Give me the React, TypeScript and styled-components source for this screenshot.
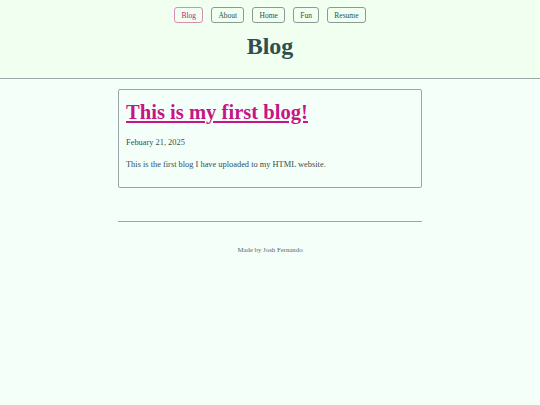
import styled, { createGlobalStyle } from "styled-components";

const GlobalStyle = createGlobalStyle`
  html, body {
    margin: 0;
    padding: 0;
    background: #f5fffa;
  }
  body {
    font-family: "Liberation Serif", "DejaVu Serif", serif;
    color: #2f4f4f;
  }
`;

const Header = styled.header`
  background: #f0fff0;
  border-bottom: 1px solid #9aaaa4;
  padding-top: 7px;
  height: 71px;
  display: flex;
  flex-direction: column;
  align-items: center;
`;

const Nav = styled.nav`
  display: flex;
  gap: 8px;
`;

const NavButton = styled.a<{ $active?: boolean }>`
  display: flex;
  align-items: center;
  justify-content: center;
  height: 14px;
  padding: 0 6.2px;
  border: 1px solid ${(p) => (p.$active ? "#d98fb4" : "#8a9a96")};
  border-radius: 3px;
  font-size: 7.5px;
  color: ${(p) => (p.$active ? "#c71585" : "#2f4f4f")};
  text-decoration: none;
`;

const Title = styled.h1`
  margin: 10px 0 0;
  font-size: 24px;
  font-weight: 700;
  color: #2f4f4f;
`;

const Main = styled.main`
  width: 304px;
  margin: 10px auto 0;
`;

const Card = styled.article`
  border: 1px solid #9aa6a6;
  border-radius: 2px;
  padding: 9px 7px 24px;
  height: 99px;
  box-sizing: border-box;
`;

const PostTitle = styled.a`
  display: block;
  font-size: 20.6px;
  font-weight: 700;
  color: #c71585;
  text-decoration: underline;
  line-height: 26px;
`;

const DateLine = styled.p`
  margin: 13px 0 0;
  font-size: 8.4px;
`;

const Text = styled.p`
  margin: 13px 0 0;
  font-size: 8.4px;
`;

const Rule = styled.hr`
  margin: 33px 0 0;
  border: none;
  border-top: 1px solid #9aa6b0;
`;

const Footer = styled.footer`
  text-align: center;
  margin-top: 24px;
  font-size: 6.8px;
  color: #556b6b;
`;

export default function App() {
  return (
    <>
      <GlobalStyle />
      <Header>
        <Nav>
          <NavButton $active>Blog</NavButton>
          <NavButton>About</NavButton>
          <NavButton>Home</NavButton>
          <NavButton>Fun</NavButton>
          <NavButton>Resume</NavButton>
        </Nav>
        <Title>Blog</Title>
      </Header>
      <Main>
        <Card>
          <PostTitle>This is my first blog!</PostTitle>
          <DateLine>Febuary 21, 2025</DateLine>
          <Text>This is the first blog I have uploaded to my HTML website.</Text>
        </Card>
        <Rule />
        <Footer>Made by Josh Fernando</Footer>
      </Main>
    </>
  );
}
